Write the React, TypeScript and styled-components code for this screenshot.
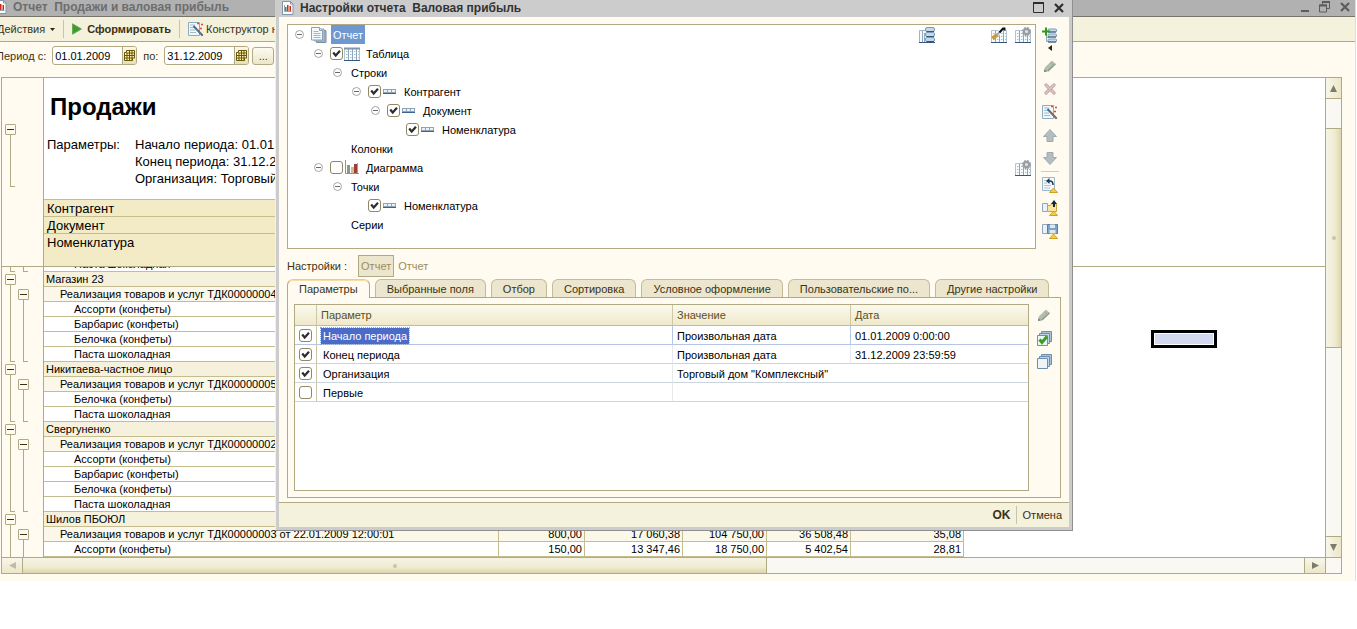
import React from "react";
import styled, { createGlobalStyle, css } from "styled-components";

const line = "#b0a983";
const gridLine = "#c6bd8e";
const cream = "#fffbf0";
const bar = "#f4f1dd";
const ink = "#3b3215";

const GlobalStyle = createGlobalStyle`
  * { box-sizing: border-box; }
  html, body { margin: 0; background: #ffffff; overflow-x: hidden; }
  body { font-family: "Liberation Sans", Arial, sans-serif; font-size: 11px; color: #000000; }
  button, input { font: inherit; color: inherit; margin: 0; padding: 0; }
  button { background: none; border: 0; cursor: pointer; }
  svg { display: block; flex: none; }
`;

/* ---------- icons ---------- */

const ReportIcon = () => (
  <svg width="13" height="14" viewBox="0 0 13 14">
    <path d="M1.5.5h8l2.500 2.500v10.500H1.500z" fill="#fbfcfd" stroke="#8197a8" />
    <path d="M9.500.5v2.500H12" fill="none" stroke="#8197a8" />
    <path d="M3.500 4v6.500h7" fill="none" stroke="#9aa5ae" />
    <path d="M4 6h1.500v4H4z" fill="#3a8a46" />
    <path d="M6 4h1.500v6H6z" fill="#d02818" />
    <path d="M8.500 5H10v5H8.500z" fill="#d02818" />
  </svg>
);

const PlayIcon = () => (
  <svg width="10" height="12" viewBox="0 0 10 12">
    <path d="M.5.800 9.500 6 .5 11.200z" fill="#3f9a30" stroke="#68a95a" />
  </svg>
);

const WandIcon = () => (
  <svg width="16" height="16" viewBox="0 0 16 16">
    <path d="M.5 1.500h11v13H.5z" fill="#f2f7fa" stroke="#8fadc2" />
    <path d="M2 4h5M2 6.500h4M2 9h5M2 11.500h6" stroke="#9dbbd2" />
    <path d="m5.500 5 9 9.500" stroke="#4a6c8c" strokeWidth="2" />
    <path d="m8 7.500 7 7.500" stroke="#9a6a48" strokeWidth="1" />
    <path d="M9 2.500h2M10 1.500v2M13 3.500h2M14 2.500v2M12 7.500h2M13 6.500v2" stroke="#e0463c" />
  </svg>
);

const CalendarIcon = () => (
  <svg width="11" height="11" viewBox="0 0 11 11">
    <path d="M2.500.5h8V8H8.500v2.500h-8v-8h2z" fill="#fff3b4" stroke="#6a5708" />
    <path d="M.5 5.500h10M.5 8h8M3 3v7.500M5.500.5v10M8 .5v10M2.500 3h8" stroke="#6a5708" fill="none" />
  </svg>
);

const PagesIcon = () => (
  <svg width="16" height="16" viewBox="0 0 16 16">
    <path d="M5.500 3.500h9.500v12H5.500z" fill="#9fb6c6" stroke="#7890a2" />
    <path d="M3.500 2h9.500v12H3.500z" fill="#c6d6e0" stroke="#8aa2b4" />
    <path d="M.5.5h8l3 3v9.500H.5z" fill="#f3f8fb" stroke="#8aa2b4" />
    <path d="M8.500.5v3h3" fill="#cddce6" stroke="#8aa2b4" />
    <path d="M2.500 4.500h5M2.500 6.500h7M2.500 8.500h7M2.500 10.500h7" stroke="#9fb9cb" />
  </svg>
);

const GridShape = () => (
  <>
    <path d="M.5 3.500h15v12H.5z" fill="#f8fbfd" stroke="#b3c4d1" />
    <path d="M4.500 4v11M8.500 4v11M12.500 4v11" stroke="#8fa6b9" />
    <path d="M2 6.500h1.500M6 6.500h1.500M10 6.500h1.500M14 6.500h1M2 9.500h1.500M6 9.500h1.500M10 9.500h1.500M14 9.500h1M2 12.500h1.500M6 12.500h1.500M10 12.500h1.500M14 12.500h1" stroke="#a9bfd1" />
    <path d="M0 15.500h16" stroke="#36587c" />
  </>
);

const TableIcon = () => (
  <svg width="16" height="14" viewBox="0 2 16 14">
    <GridShape />
    <path d="M0 3.500h16" stroke="#7e97ad" strokeWidth="2" />
  </svg>
);

const FieldIcon = () => (
  <svg width="16" height="5" viewBox="0 0 16 5">
    <path d="M1 0h13v5H1z" fill="#8ea5b8" />
    <path d="M2 1h3v2H2zM6 1h3v2H6zM10 1h3v2h-3z" fill="#eaf3f9" />
    <path d="M1 4.500h13" stroke="#3d648c" />
  </svg>
);

const ChartIcon = () => (
  <svg width="16" height="15" viewBox="0 0 16 15">
    <path d="M1.500 0v13.500H15" fill="none" stroke="#8795a3" />
    <path d="M3 5h3v8H3z" fill="#7d9f86" />
    <path d="M7 7h3v6H7z" fill="#d9b98f" />
    <path d="M10 4h3v9h-3z" fill="#9c3f38" />
    <path d="M13 3h1v10h-1z" fill="#cc8a84" />
  </svg>
);

const GridListIcon = () => (
  <svg width="16" height="16" viewBox="0 0 16 16">
    <path d="M.5 3.500h8v12h-8z" fill="#f5f9fc" stroke="#9eb3c4" />
    <path d="M3.500 4v11M5.500 6v9" stroke="#8fa9c0" />
    <path d="M0 15.500h16" stroke="#36587c" />
    {[0.5, 5.5, 10.5].map((y) => (
      <g key={y}>
        <rect x="6.500" y={y} width="9" height="4" rx="1.500" fill="#c5d9e8" stroke="#7c9cb7" />
        <path d={`M7.500 ${y + 4}h7.500`} stroke="#2f577c" />
      </g>
    ))}
  </svg>
);

const GridBrushIcon = () => (
  <svg width="16" height="16" viewBox="0 0 16 16">
    <GridShape />
    <path d="m6 8 5-6" stroke="#fff" strokeWidth="4" />
    <path d="m1.500 11.500 5-4" stroke="#c99a3c" strokeWidth="4" />
    <path d="m6 8 3-3.500" stroke="#9fb0bd" strokeWidth="2" />
    <path d="m8.500 5.500 3.500-4h1.500v2" stroke="#111" strokeWidth="2" fill="none" />
  </svg>
);

const GridGearIcon = () => (
  <svg width="16" height="16" viewBox="0 0 16 16">
    <GridShape />
    <circle cx="11.500" cy="4.500" r="3.800" fill="#9a9ea3" stroke="#9a9ea3" strokeWidth="1.500" strokeDasharray="1.700 1.300" />
    <circle cx="11.500" cy="4.500" r="1.500" fill="#e3e5e7" />
  </svg>
);

const AddIcon = () => (
  <svg width="16" height="16" viewBox="0 0 16 16">
    <path d="M4.500 8v6.500M4.500 10.500H7M4.500 14.500H7" stroke="#8fa9c0" fill="none" />
    {[2.5, 7.5, 12.5].map((y) => (
      <g key={y}>
        <rect x="6" y={y - 0.5} width="8.500" height="3" rx="1" fill="#c5d9e8" stroke="#7c9cb7" />
        <path d={`M6 ${y + 2.5}h8`} stroke="#2f577c" />
      </g>
    ))}
    <path d="M0 4.500h8M4 .5v8" stroke="#2f9a20" strokeWidth="2" />
  </svg>
);

const CaretLeftIcon = () => (
  <svg width="4" height="6" viewBox="0 0 4 6">
    <path d="M4 0v6L0 3z" fill="#2e2608" />
  </svg>
);

const CaretDownIcon = () => (
  <svg width="5" height="3" viewBox="0 0 5 3">
    <path d="M0 0h5L2.500 3z" fill="#2e2608" />
  </svg>
);

const PencilIcon = () => (
  <svg width="14" height="14" viewBox="0 0 14 14">
    <path d="m1 13 .8-4.500L9 1.500 12.800 5 5.500 12.200z" fill="#b3bfac" />
    <path d="m4.800 12 7.500-7" stroke="#8b9b87" strokeWidth="1.500" />
    <path d="m7.500 3.500 3.500 3.500" stroke="#9caa97" />
    <path d="m1 13 .5-3L4 12.500z" fill="#7b8779" />
  </svg>
);

const DeleteIcon = () => (
  <svg width="12" height="12" viewBox="0 0 12 12">
    <path d="m2 2 8 8M10 2l-8 8" stroke="#c3a9a8" strokeWidth="3.200" strokeLinecap="round" />
    <path d="m2 2 8 8M10 2l-8 8" stroke="#dcc8c6" strokeWidth="1.400" strokeLinecap="round" />
  </svg>
);

const ArrowIcon = ({ down }: { down?: boolean }) => (
  <svg width="14" height="13" viewBox="0 0 14 13">
    <path
      d={down ? "M4 .5h6v5h3.500L7 12.500.5 5.500H4z" : "M4 12.500h6v-5h3.500L7 .5.5 7.500H4z"}
      fill="#b3bec3"
      stroke="#9dabb1"
    />
  </svg>
);

const Triangle = () => <path d="m7.500 15.500 4-4.500 4 4.500z" fill="#f2cf45" stroke="#d0a01f" />;

const RevertIcon = () => (
  <svg width="16" height="16" viewBox="0 0 16 16">
    <path d="M.5.5h12v13H.5z" fill="#f5f9fc" stroke="#9eb6c8" />
    <path d="M2 3.500h3M2 6h3M2 8.500h7M2 11h6" stroke="#a9c2d4" />
    <path d="M5 4h3q3 0 3 4" fill="none" stroke="#1c3550" strokeWidth="1.500" />
    <path d="M7.500 1v6L4 4z" fill="#1c3550" />
    <Triangle />
  </svg>
);

const LoadIcon = () => (
  <svg width="16" height="16" viewBox="0 0 16 16">
    <path d="M.5 3.500h5v8h-5z" fill="#eaf2f8" stroke="#8ea9bd" />
    <path d="M5.500 5.500h3l1-1.500h5v7.500h-9z" fill="#fae69a" stroke="#cda23a" />
    <path d="M12 7V3" stroke="#14283c" strokeWidth="2" />
    <path d="M9 4h6l-3-4z" fill="#14283c" />
    <Triangle />
  </svg>
);

const SaveIcon = () => (
  <svg width="16" height="16" viewBox="0 0 16 16">
    <path d="M.5 1.500h5v9h-5z" fill="#eaf2f8" stroke="#8ea9bd" />
    <path d="M5.500 1.500h10v9h-10z" fill="#7fa3c0" stroke="#5a80a0" />
    <path d="M8 1.500h5V5H8zM7.500 7h6v3.500h-6z" fill="#dce9f2" />
    <Triangle />
  </svg>
);

const StackIcon = ({ checked }: { checked?: boolean }) => (
  <svg width="15" height="15" viewBox="0 0 15 15">
    <path d="M4.500.5h10v10h-10z" fill="#a9c3d6" stroke="#6f90ac" />
    <path d="M2.500 2.500h10v10h-10z" fill="#c3d6e4" stroke="#6f90ac" />
    <path d="M.5 4.500h10v10H.5z" fill="#eef5fa" stroke="#6f90ac" />
    {checked && <path d="m2.500 8.500 2.500 3 5-6" fill="none" stroke="#35a01f" strokeWidth="3" />}
  </svg>
);

const MinusCircle = () => (
  <svg width="9" height="9" viewBox="0 0 9 9">
    <circle cx="4.500" cy="4.500" r="4" fill="#fff" stroke="#a5a5a5" />
    <path d="M2 4.500h5" stroke="#6a6a6a" />
  </svg>
);

const MinimizeIcon = () => (
  <svg width="8" height="12" viewBox="0 0 8 12">
    <path d="M0 10h8" stroke="#5c5c5c" strokeWidth="2" />
  </svg>
);

const RestoreIcon = () => (
  <svg width="11" height="12" viewBox="0 0 11 12">
    <path d="M3.500 3V1h7v6.500H8M.5 4h7v7H.5z" fill="none" stroke="#5c5c5c" />
    <path d="M3 1h8M0 4.500h8" stroke="#5c5c5c" strokeWidth="2" />
  </svg>
);

const MaximizeIcon = () => (
  <svg width="11" height="11" viewBox="0 0 11 11">
    <path d="M.5.5h10v10H.5z" fill="none" stroke="#2e2e2e" />
    <path d="M0 1h11" stroke="#2e2e2e" strokeWidth="2" />
  </svg>
);

const CloseIcon = ({ color }: { color: string }) => (
  <svg width="10" height="10" viewBox="0 0 10 10">
    <path d="m1 1 8 8M9 1 1 9" stroke={color} strokeWidth="2.200" />
  </svg>
);

const ScrollArrow = ({ turn, muted }: { turn: number; muted?: boolean }) => (
  <svg width="9" height="9" viewBox="0 0 9 9">
    <path d="M4.500 1 8 8H1z" fill={muted ? "#bdbba8" : "#7d7b70"} transform={`rotate(${turn} 4.500 4.500)`} />
  </svg>
);

/* ---------- report window ---------- */

const Screen = styled.div`
  position: relative;
  overflow: hidden;
`;

const ReportWindow = styled.main`
  margin-left: -8px;
  margin-right: 1px;
  padding-bottom: 7px;
  border-right: 1px solid #dfdfdf;
  background: ${cream};
`;

const TitleBar = styled.header<{ $front?: boolean }>`
  display: flex;
  align-items: center;
  gap: 6px;
  height: 17px;
  font-size: 12px;
  font-weight: bold;
  white-space: pre;
  ${(p) =>
    p.$front
      ? css`
          padding: 0 8px 2px 6px;
          background: #cccccc;
          color: #333333;
        `
      : css`
          padding: 0 5px 2px 2px;
          background: #b1b1b1;
          border-bottom: 1px solid #77756a;
          color: #6d6d6d;
        `}
`;

const WindowButtons = styled.div`
  display: flex;
  align-items: center;
  gap: 10px;
  margin-left: auto;
`;

const Toolbar = styled.div`
  display: flex;
  align-items: center;
  height: 25px;
  padding-left: 5px;
  background: ${bar};
  border-bottom: 1px solid ${line};
  color: ${ink};
`;

const ToolButton = styled.button<{ $strong?: boolean; $gap: number }>`
  display: flex;
  align-items: center;
  gap: ${(p) => p.$gap}px;
  white-space: nowrap;
  font-weight: ${(p) => (p.$strong ? "bold" : "normal")};
`;

const Divider = styled.span`
  width: 1px;
  height: 18px;
  margin: 0 8px;
  background: #c9c4a4;
`;

const PeriodRow = styled.form`
  display: flex;
  align-items: center;
  height: 35px;
  padding: 0 0 8px 4px;
  color: ${ink};

  label {
    white-space: nowrap;
  }
`;

const DateField = styled.span`
  display: flex;
  height: 19px;
  width: 85px;
  margin: 0 6px;
  border: 1px solid ${line};
  border-radius: 3px;
  background: #ffffff;
  overflow: hidden;

  input {
    width: 69px;
    padding-left: 2px;
    border: 0;
    outline: 0;
    color: #000000;
    background: none;
  }

  button {
    display: flex;
    align-items: center;
    justify-content: center;
    flex: 1;
    border-left: 1px solid ${line};
    background: linear-gradient(#fbf8e6, #e6dfb4);
  }
`;

const MoreButton = styled.button`
  height: 18px;
  width: 22px;
  margin-left: -3px;
  border: 1px solid ${line};
  border-radius: 3px;
  background: linear-gradient(#fdfbf0, #ece6c8);
`;

const Sheet = styled.section`
  display: grid;
  grid-template-columns: 1fr 15px;
  margin: 0 13px 0 9px;
  border: 1px solid ${line};
`;

const SheetView = styled.div`
  min-width: 0;
  border-right: 1px solid ${line};
  background: #ffffff;
`;

const TopPane = styled.div`
  display: grid;
  grid-template-columns: 42px 920px;
  height: 189px;
  border-bottom: 1px solid ${line};
`;

const TopGutter = styled.div`
  display: flex;
  flex-direction: column;
  padding: 44px 0 79px 3px;
  border-right: 1px solid ${line};
  background: ${cream};
`;

const TopContent = styled.div`
  display: flex;
  flex-direction: column;
  justify-content: space-between;
  white-space: nowrap;
`;

const Heading = styled.h1`
  margin: 0;
  padding: 14px 0 0 6px;
  font-size: 24px;
  line-height: 30px;
`;

const Params = styled.dl`
  display: grid;
  grid-template-columns: 88px 1fr;
  margin: 0;
  padding: 0 0 12px 3px;
  font-size: 13px;
  line-height: 17px;

  dt, dd { margin: 0; }
  dd { grid-column: 2; }
  dt + dd { grid-row: 1; }
`;

const Levels = styled.div`
  border-top: 1px solid ${gridLine};
  background: #f3ebc6;
  font-size: 13px;
  line-height: 18px;

  div {
    height: 17px;
    padding-left: 3px;
    border-bottom: 1px solid ${gridLine};
  }
  div:last-child {
    height: 32px;
    border-bottom: 0;
  }
`;

const BodyPane = styled.div`
  position: relative;
  display: flex;
  flex-direction: column;
  justify-content: flex-end;
  height: 290px;
  overflow: hidden;
`;

const ReportTable = styled.table`
  flex: none;
  width: 962px;
  table-layout: fixed;
  border-spacing: 0;
  line-height: 14px;
  white-space: nowrap;

  td, th {
    height: 15px;
    padding: 0;
    font-weight: normal;
    overflow: hidden;
  }
`;

const GutterCell = styled.td`
  border-right: 1px solid ${line};
  background: ${cream};
`;

const GutterSlots = styled.div`
  display: flex;
  height: 15px;
  padding-left: 3px;
`;

const NameCell = styled.th<{ $level: number }>`
  && {
    padding-left: ${(p) => 2 + p.$level * 14}px;
    text-align: left;
    border-right: 1px solid ${gridLine};
    border-bottom: 1px solid ${gridLine};
    background: ${(p) => ["#f6f1dc", "#fbf8ea", "#ffffff"][p.$level]};
  }
`;

const NumberCell = styled.td<{ $level: number }>`
  && {
    padding-right: 2px;
    text-align: right;
    border-right: 1px solid ${gridLine};
    border-bottom: 1px solid ${gridLine};
    background: ${(p) => ["#f6f1dc", "#fbf8ea", "#ffffff"][p.$level]};
  }
`;

const Slot = styled.span`
  display: flex;
  flex-direction: column;
  width: 13px;
`;

const Stem = styled.span<{ $end?: boolean }>`
  flex: 1;
  width: 5px;
  margin-left: 5px;
  border-left: 1px solid ${line};
  border-bottom: ${(p) => (p.$end ? `1px solid ${line}` : "0")};
`;

const FoldButton = styled.button`
  display: flex;
  flex: none;
  align-items: center;
  justify-content: center;
  width: 11px;
  height: 11px;
  margin-top: 2px;
  border: 1px solid ${line};
  border-radius: 1px;

  &::before {
    content: "";
    width: 7px;
    height: 1px;
    background: #3b3215;
  }
`;

const ActiveCell = styled.div`
  position: absolute;
  top: 63px;
  left: 1149px;
  width: 66px;
  height: 18px;
  border: 3px solid #000000;
  background: #d3d9ef;
  box-shadow: inset 0 0 0 1px #ffffff;
`;

const VerticalBar = styled.div`
  display: flex;
  flex-direction: column;
  background: #faf8f2;
`;

const HorizontalBar = styled.div`
  display: flex;
  height: 16px;
  border-top: 1px solid ${line};
  border-right: 1px solid ${line};
  background: #faf8f2;
`;

const Corner = styled.div`
  border-top: 1px solid ${line};
  background: #faf8f2;
`;

const ArrowButton = styled.button<{ $vertical?: boolean }>`
  display: flex;
  flex: none;
  align-items: center;
  justify-content: center;
  ${(p) => (p.$vertical ? "height: 20px;" : "width: 20px;")}
  background: linear-gradient(${(p) => (p.$vertical ? "to right" : "to bottom")}, #f8f6e8, #ece7c8);
`;

/* start and size are thousandths of the track */
const Track = styled.div<{ $vertical?: boolean; $start: number; $size: number }>`
  display: grid;
  flex: 1;
  ${(p) => {
    const parts = `${p.$start}fr ${p.$size}fr ${1000 - p.$start - p.$size}fr`;
    return p.$vertical
      ? `grid-template-rows: ${parts}; border-top: 1px solid ${line}; border-bottom: 1px solid ${line};`
      : `grid-template-columns: ${parts}; border-left: 1px solid ${line}; border-right: 1px solid ${line};`;
  }}
`;

const Thumb = styled.div<{ $vertical?: boolean }>`
  display: flex;
  align-items: center;
  justify-content: center;
  ${(p) =>
    p.$vertical
      ? `grid-row: 2; border-top: 1px solid ${line}; border-bottom: 1px solid ${line};`
      : `grid-column: 2; border-right: 1px solid ${line};`}
  background: linear-gradient(${(p) => (p.$vertical ? "to right" : "to bottom")}, #f6f4e4, #efebd2 60%, #ddd6ac);

  &::before {
    content: "";
    width: 4px;
    height: 4px;
    border-radius: 2px;
    background: #c9c5a6;
  }
`;

type Row = { name: string; level: number; marks: string; values?: string[] };

const goods = (names: string[]): Row[] =>
  names.map((name, i) => ({ name, level: 2, marks: i === names.length - 1 ? "ee" : "ss" }));

const rows: Row[] = [
  ...goods(["Паста шоколадная"]),
  { name: "Магазин 23", level: 0, marks: "f" },
  { name: "Реализация товаров и услуг ТДК00000004", level: 1, marks: "sf" },
  ...goods(["Ассорти (конфеты)", "Барбарис (конфеты)", "Белочка (конфеты)", "Паста шоколадная"]),
  { name: "Никитаева-частное лицо", level: 0, marks: "f" },
  { name: "Реализация товаров и услуг ТДК00000005", level: 1, marks: "sf" },
  ...goods(["Белочка (конфеты)", "Паста шоколадная"]),
  { name: "Свергуненко", level: 0, marks: "f" },
  { name: "Реализация товаров и услуг ТДК00000002", level: 1, marks: "sf" },
  ...goods(["Ассорти (конфеты)", "Барбарис (конфеты)", "Белочка (конфеты)", "Паста шоколадная"]),
  { name: "Шилов ПБОЮЛ", level: 0, marks: "f" },
  {
    name: "Реализация товаров и услуг ТДК00000003 от 22.01.2009 12:00:01",
    level: 1,
    marks: "sf",
    values: ["800,00", "17 060,38", "104 750,00", "36 508,48", "35,08"],
  },
  {
    name: "Ассорти (конфеты)",
    level: 2,
    marks: "ss",
    values: ["150,00", "13 347,46", "18 750,00", "5 402,54", "28,81"],
  },
];

const Mark = ({ kind }: { kind: string }) => (
  <Slot>
    {kind === "f" && <FoldButton type="button" aria-label="Свернуть группу" />}
    <Stem $end={kind === "e"} />
  </Slot>
);

const Report = () => (
  <ReportWindow>
    <TitleBar>
      <ReportIcon />
      <span>{"Отчет  Продажи и валовая прибыль"}</span>
      <WindowButtons>
        <button type="button" aria-label="Свернуть"><MinimizeIcon /></button>
        <button type="button" aria-label="Восстановить"><RestoreIcon /></button>
        <button type="button" aria-label="Закрыть"><CloseIcon color="#5c5c5c" /></button>
      </WindowButtons>
    </TitleBar>
    <Toolbar>
      <ToolButton type="button" $gap={5}>Действия <CaretDownIcon /></ToolButton>
      <Divider />
      <ToolButton type="button" $gap={5} $strong><PlayIcon /> Сформировать</ToolButton>
      <Divider />
      <ToolButton type="button" $gap={2}><WandIcon /> Конструктор настроек</ToolButton>
    </Toolbar>
    <PeriodRow>
      <label htmlFor="from">Период с:</label>
      <DateField>
        <input id="from" defaultValue="01.01.2009" />
        <button type="button" aria-label="Выбрать дату начала"><CalendarIcon /></button>
      </DateField>
      <label htmlFor="to">по:</label>
      <DateField>
        <input id="to" defaultValue="31.12.2009" />
        <button type="button" aria-label="Выбрать дату конца"><CalendarIcon /></button>
      </DateField>
      <MoreButton type="button">...</MoreButton>
    </PeriodRow>
    <Sheet>
      <SheetView>
        <TopPane>
          <TopGutter>
            <FoldButton type="button" aria-label="Свернуть заголовок" />
            <Stem $end />
          </TopGutter>
          <TopContent>
            <Heading>Продажи</Heading>
            <div>
              <Params>
                <dt>Параметры:</dt>
                <dd>Начало периода: 01.01.2009</dd>
                <dd>Конец периода: 31.12.2009</dd>
                <dd>Организация: Торговый дом</dd>
              </Params>
              <Levels>
                <div>Контрагент</div>
                <div>Документ</div>
                <div>Номенклатура</div>
              </Levels>
            </div>
          </TopContent>
        </TopPane>
        <BodyPane>
          <ReportTable>
            <colgroup>
              <col style={{ width: 42 }} />
              <col style={{ width: 455 }} />
              <col style={{ width: 86 }} />
              <col style={{ width: 98 }} />
              <col style={{ width: 84 }} />
              <col style={{ width: 84 }} />
              <col style={{ width: 113 }} />
            </colgroup>
            <tbody>
              {rows.map((row, i) => (
                <tr key={i}>
                  <GutterCell>
                    <GutterSlots>
                      {row.marks.split("").map((kind, k) => <Mark key={k} kind={kind} />)}
                    </GutterSlots>
                  </GutterCell>
                  <NameCell scope="row" $level={row.level}>{row.name}</NameCell>
                  {[0, 1, 2, 3, 4].map((k) => (
                    <NumberCell key={k} $level={row.level}>{row.values?.[k]}</NumberCell>
                  ))}
                </tr>
              ))}
            </tbody>
          </ReportTable>
          <ActiveCell />
        </BodyPane>
      </SheetView>
      <VerticalBar>
        <ArrowButton type="button" $vertical aria-label="Вверх"><ScrollArrow turn={0} /></ArrowButton>
        <Track $vertical $start={66} $size={504}><Thumb $vertical /></Track>
        <ArrowButton type="button" $vertical aria-label="Вниз"><ScrollArrow turn={180} /></ArrowButton>
      </VerticalBar>
      <HorizontalBar>
        <ArrowButton type="button" aria-label="Влево"><ScrollArrow turn={270} muted /></ArrowButton>
        <Track $start={0} $size={581}><Thumb /></Track>
        <ArrowButton type="button" aria-label="Вправо"><ScrollArrow turn={90} /></ArrowButton>
      </HorizontalBar>
      <Corner />
    </Sheet>
  </ReportWindow>
);

/* ---------- settings dialog ---------- */

const Dialog = styled.section`
  position: absolute;
  top: 0;
  left: 275px;
  width: 798px;
  border: solid #8f8f8f;
  border-width: 0 1px 1px 0;
  background: #cccccc;
  box-shadow: inset 1px 0 0 #f0f0f0;
  color: ${ink};
`;

const DialogBody = styled.div`
  margin: 0 3px 3px 4px;
  background: ${cream};
`;

const TreeArea = styled.div`
  display: grid;
  grid-template-columns: 1fr 28px;
  padding: 7px 5px 0 8px;
`;

const Tree = styled.ul`
  height: 225px;
  margin: 0;
  padding: 0;
  list-style: none;
  border: 1px solid ${line};
  background: #ffffff;
  color: #000000;
`;

const TreeItem = styled.li<{ $depth: number }>`
  display: flex;
  align-items: center;
  height: 19px;
  padding: 0 4px 0 ${(p) => 2 + p.$depth * 19}px;
`;

const ToggleSlot = styled.span`
  display: flex;
  align-items: center;
  justify-content: center;
  width: 19px;
  margin-right: 2px;
`;

const NodeIcon = styled.span`
  display: flex;
  width: 16px;
  margin: 0 4px 0 1px;
`;

const RootIcon = styled(NodeIcon)`
  margin: 0 4px 0 0;
`;

const NodeLabel = styled.span<{ $selected?: boolean }>`
  padding: 1px 2px 0;
  line-height: 18px;
  ${(p) => p.$selected && "background: #6f97d0; color: #ffffff;"}
`;

const RowActions = styled.span`
  display: flex;
  gap: 8px;
  margin-left: auto;

  button:first-child:not(:last-child) { margin-right: 48px; }
`;

const SideTools = styled.div`
  display: flex;
  flex-direction: column;
  align-items: center;
  padding-top: 3px;
`;

const SideButton = styled.button`
  display: flex;
  align-items: center;
  justify-content: center;
  width: 16px;
  height: 16px;
  margin-bottom: 7px;
`;

const AddButton = styled(SideButton)`
  flex-direction: column;
  justify-content: flex-start;
  gap: 2px;
  height: 24px;
`;

const SideDivider = styled.span`
  width: 18px;
  height: 1px;
  margin: -2px 0 5px;
  background: #d3cda9;
`;

const Box = styled.span`
  position: relative;
  display: flex;
  flex: none;
  width: 13px;
  height: 13px;

  input {
    appearance: none;
    width: 13px;
    height: 13px;
    border: 1px solid #8f8862;
    border-radius: 3px;
    background: #ffffff;
  }
  svg {
    position: absolute;
    top: 2px;
    left: 2px;
    pointer-events: none;
    visibility: hidden;
  }
  input:checked + svg { visibility: visible; }
`;

const Check = ({ on, label }: { on: boolean; label: string }) => (
  <Box>
    <input type="checkbox" defaultChecked={on} aria-label={label} />
    <svg width="9" height="9" viewBox="0 0 9 9">
      <path d="M1.200 3.500 3.700 6.500 8 1.800" fill="none" stroke="#2d2d33" strokeWidth="2.200" />
    </svg>
  </Box>
);

const SettingsRow = styled.div`
  display: flex;
  align-items: center;
  height: 22px;
  margin: 6px 0 2px;
  padding-left: 8px;
`;

const CrumbButton = styled.button<{ $pressed?: boolean }>`
  height: 22px;
  padding: 0 4px;
  color: #9c8c5e;
  ${(p) =>
    p.$pressed &&
    css`
      margin-left: 11px;
      padding: 0 2px;
      border: 1px solid ${line};
      background: #ebe6cd;
    `}
`;

const Tabs = styled.div`
  display: flex;
  gap: 5px;
  padding: 0 8px;
`;

const Tab = styled.button<{ $active?: boolean }>`
  height: 18px;
  padding: 0 11px;
  border: 1px solid #c2bb98;
  border-bottom: 0;
  border-radius: 6px 6px 0 0;
  background: #ebe6cd;
  white-space: nowrap;
  ${(p) =>
    p.$active &&
    css`
      position: relative;
      height: 19px;
      margin-bottom: -1px;
      padding-bottom: 1px;
      border-color: ${line};
      border-top-color: #f0c987;
      background: ${cream};
      box-shadow: inset 0 1px 0 #f8dca6;
    `}
`;

const TabPanel = styled.div`
  display: grid;
  grid-template-columns: 1fr 31px;
  height: 201px;
  margin: 0 8px 4px;
  padding: 6px 0 6px 6px;
  border: 1px solid ${line};
`;

const ParamFrame = styled.div`
  border: 1px solid ${line};
  background: #ffffff;
`;

const ParamTable = styled.table`
  width: 100%;
  table-layout: fixed;
  border-spacing: 0;
  color: #000000;

  th {
    height: 21px;
    padding: 0 0 0 4px;
    text-align: left;
    font-weight: normal;
    color: #5c4e1e;
    border-bottom: 1px solid ${gridLine};
    border-right: 1px solid #cfc8a2;
    background: linear-gradient(#fbf9ee, #efe9cb);
  }
  td {
    height: 19px;
    padding: 1px 0 0 4px;
    border-bottom: 1px solid #cdd5dc;
    border-right: 1px solid #e6e9ec;
  }
  td:first-child, th:first-child {
    width: 22px;
    padding-top: 0;
    border-right-color: #cdc7aa;
  }
  th:nth-child(2) { width: 356px; }
  th:nth-child(3) { width: 178px; }
  th:last-child, td:last-child { border-right: 0; }
`;

const ParamRow = styled.tr<{ $current?: boolean }>`
  ${(p) => p.$current && "td { border-color: #b4c6e4; }"}
`;

const ParamName = styled.span<{ $selected?: boolean }>`
  display: inline-block;
  padding: 0 2px;
  line-height: 16px;
  ${(p) =>
    p.$selected &&
    css`
      background: #4a6cc8;
      outline: 1px dotted #8ea6e4;
      color: #ffffff;
    `}
`;

const PanelTools = styled.div`
  display: flex;
  flex-direction: column;
  align-items: flex-start;
  padding: 3px 0 0 7px;
`;

const Footer = styled.footer`
  display: flex;
  align-items: center;
  justify-content: flex-end;
  height: 25px;
  padding-right: 7px;
  border-top: 1px solid ${line};
  background: ${bar};

  button + button {
    margin-left: 5px;
    padding-left: 6px;
    border-left: 1px solid #c9c4a4;
    font-size: 11px;
    line-height: 18px;
    font-weight: normal;
  }
  button { font-size: 12px; font-weight: bold; }
`;

type Node = {
  label: string;
  depth: number;
  fold?: boolean;
  check?: boolean;
  icon?: React.ReactNode;
  actions?: React.ReactNode[];
};

const nodes: Node[] = [
  { label: "Отчет", depth: 0, fold: true, icon: <PagesIcon />, actions: [<GridListIcon />, <GridBrushIcon />, <GridGearIcon />] },
  { label: "Таблица", depth: 1, fold: true, check: true, icon: <TableIcon /> },
  { label: "Строки", depth: 2, fold: true },
  { label: "Контрагент", depth: 3, fold: true, check: true, icon: <FieldIcon /> },
  { label: "Документ", depth: 4, fold: true, check: true, icon: <FieldIcon /> },
  { label: "Номенклатура", depth: 5, check: true, icon: <FieldIcon /> },
  { label: "Колонки", depth: 2 },
  { label: "Диаграмма", depth: 1, fold: true, check: false, icon: <ChartIcon />, actions: [<GridGearIcon />] },
  { label: "Точки", depth: 2, fold: true },
  { label: "Номенклатура", depth: 3, check: true, icon: <FieldIcon /> },
  { label: "Серии", depth: 2 },
];

const tabs = [
  "Параметры",
  "Выбранные поля",
  "Отбор",
  "Сортировка",
  "Условное оформление",
  "Пользовательские по...",
  "Другие настройки",
];

const params: [boolean, string, string, string][] = [
  [true, "Начало периода", "Произвольная дата", "01.01.2009 0:00:00"],
  [true, "Конец периода", "Произвольная дата", "31.12.2009 23:59:59"],
  [true, "Организация", 'Торговый дом "Комплексный"', ""],
  [false, "Первые", "", ""],
];

const Settings = () => (
  <Dialog role="dialog" aria-label="Настройки отчета">
    <TitleBar $front>
      <ReportIcon />
      <span>{"Настройки отчета  Валовая прибыль"}</span>
      <WindowButtons>
        <button type="button" aria-label="Развернуть"><MaximizeIcon /></button>
        <button type="button" aria-label="Закрыть"><CloseIcon color="#2e2e2e" /></button>
      </WindowButtons>
    </TitleBar>
    <DialogBody>
      <TreeArea>
        <Tree>
          {nodes.map((n, i) => {
            const IconSlot = n.check === undefined ? RootIcon : NodeIcon;
            return (
              <TreeItem key={i} $depth={n.depth}>
                <ToggleSlot>
                  {n.fold && <button type="button" aria-label={`Свернуть ${n.label}`}><MinusCircle /></button>}
                </ToggleSlot>
                {n.check !== undefined && <Check on={n.check} label={n.label} />}
                {n.icon && <IconSlot>{n.icon}</IconSlot>}
                <NodeLabel $selected={i === 0}>{n.label}</NodeLabel>
                {n.actions && (
                  <RowActions>
                    {n.actions.map((a, k) => (
                      <button key={k} type="button" aria-label={`Настройка ${k + 1}`}>{a}</button>
                    ))}
                  </RowActions>
                )}
              </TreeItem>
            );
          })}
        </Tree>
        <SideTools>
          <AddButton type="button" aria-label="Добавить"><AddIcon /><CaretLeftIcon /></AddButton>
          <SideButton type="button" aria-label="Изменить"><PencilIcon /></SideButton>
          <SideButton type="button" aria-label="Удалить"><DeleteIcon /></SideButton>
          <SideButton type="button" aria-label="Конструктор"><WandIcon /></SideButton>
          <SideButton type="button" aria-label="Выше"><ArrowIcon /></SideButton>
          <SideButton type="button" aria-label="Ниже"><ArrowIcon down /></SideButton>
          <SideDivider />
          <SideButton type="button" aria-label="Стандартные настройки"><RevertIcon /></SideButton>
          <SideButton type="button" aria-label="Загрузить настройки"><LoadIcon /></SideButton>
          <SideButton type="button" aria-label="Сохранить настройки"><SaveIcon /></SideButton>
        </SideTools>
      </TreeArea>
      <SettingsRow>
        <span>Настройки :</span>
        <CrumbButton type="button" $pressed>Отчет</CrumbButton>
        <CrumbButton type="button">Отчет</CrumbButton>
      </SettingsRow>
      <Tabs role="tablist">
        {tabs.map((t, i) => (
          <Tab key={t} type="button" role="tab" aria-selected={i === 0} $active={i === 0}>{t}</Tab>
        ))}
      </Tabs>
      <TabPanel role="tabpanel">
        <ParamFrame>
          <ParamTable>
            <thead>
              <tr><th /><th>Параметр</th><th>Значение</th><th>Дата</th></tr>
            </thead>
            <tbody>
              {params.map(([on, name, value, date], i) => (
                <ParamRow key={name} $current={i === 0}>
                  <td><Check on={on} label={name} /></td>
                  <td><ParamName $selected={i === 0}>{name}</ParamName></td>
                  {date ? <><td>{value}</td><td>{date}</td></> : <td colSpan={2}>{value}</td>}
                </ParamRow>
              ))}
            </tbody>
          </ParamTable>
        </ParamFrame>
        <PanelTools>
          <SideButton type="button" aria-label="Изменить параметр"><PencilIcon /></SideButton>
          <SideButton type="button" aria-label="Включить все"><StackIcon checked /></SideButton>
          <SideButton type="button" aria-label="Выключить все"><StackIcon /></SideButton>
        </PanelTools>
      </TabPanel>
      <Footer>
        <button type="button">OK</button>
        <button type="button">Отмена</button>
      </Footer>
    </DialogBody>
  </Dialog>
);

export default function App() {
  return (
    <>
      <GlobalStyle />
      <Screen>
        <Report />
        <Settings />
      </Screen>
    </>
  );
}
